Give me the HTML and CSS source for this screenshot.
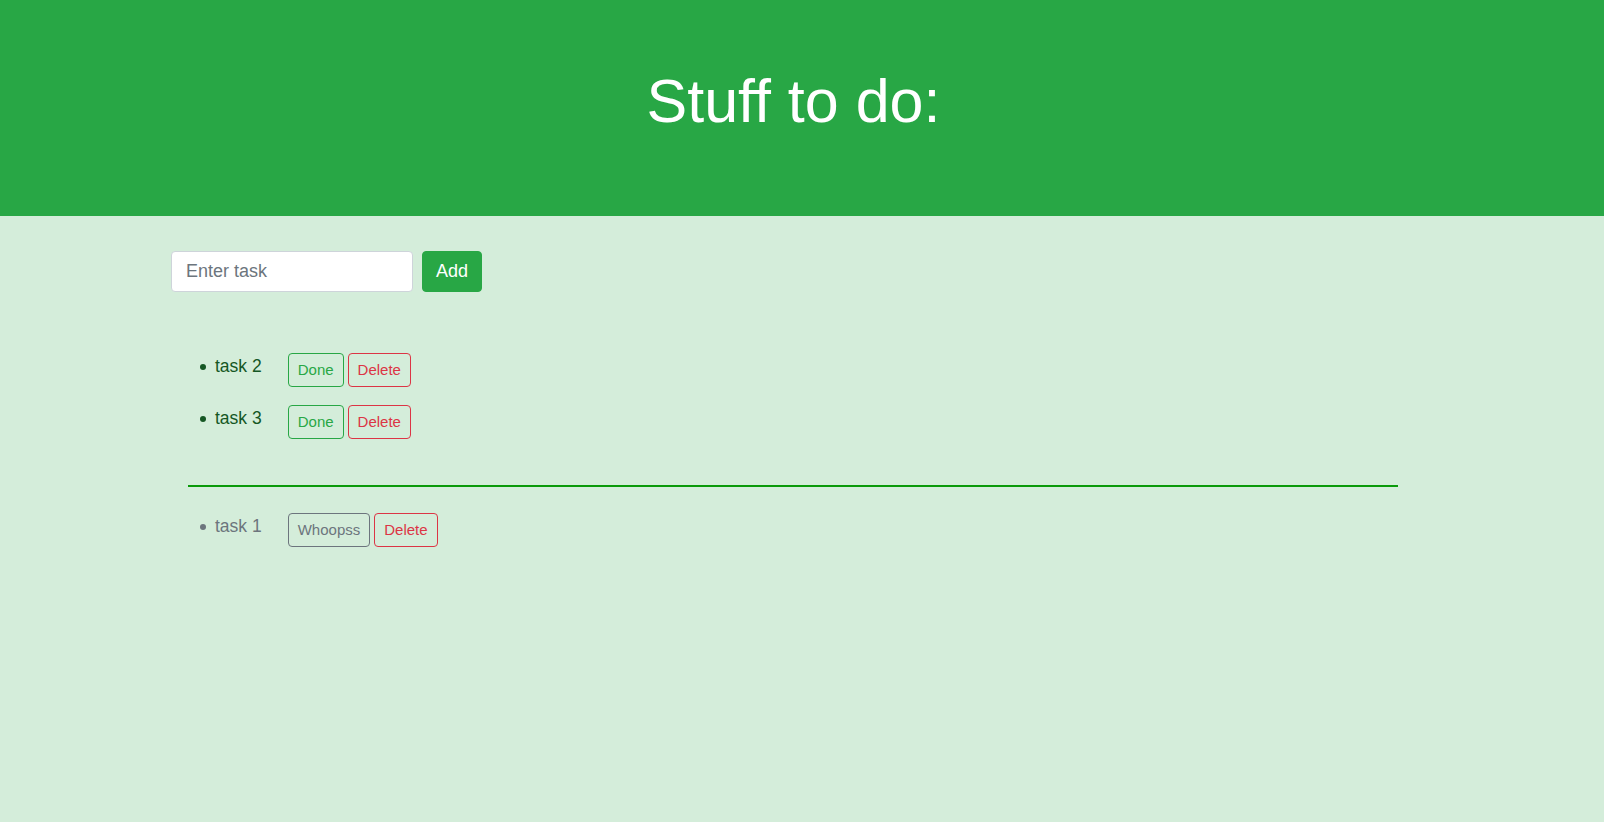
FILE: index.html
```html
<!DOCTYPE html>
<html lang="en">
<head>
<meta charset="utf-8">
<title>Stuff to do</title>
<link rel="stylesheet" href="styles.css">
</head>
<body>
<header class="hero">
  <h1 class="hero-title">Stuff to do:</h1>
</header>
<main class="content">
  <form class="add-form">
    <input class="task-input" type="text" placeholder="Enter task">
    <button class="btn btn-add" type="button">Add</button>
  </form>
  <ul class="task-list">
    <li class="task">
      <span class="task-name">task 2</span>
      <div class="task-actions">
        <button class="btn btn-sm btn-outline-success" type="button">Done</button>
        <button class="btn btn-sm btn-outline-danger" type="button">Delete</button>
      </div>
    </li>
    <li class="task">
      <span class="task-name">task 3</span>
      <div class="task-actions">
        <button class="btn btn-sm btn-outline-success" type="button">Done</button>
        <button class="btn btn-sm btn-outline-danger" type="button">Delete</button>
      </div>
    </li>
  </ul>
  <hr class="divider">
  <ul class="task-list done-list">
    <li class="task task-done">
      <span class="task-name">task 1</span>
      <div class="task-actions">
        <button class="btn btn-sm btn-outline-secondary" type="button">Whoopss</button>
        <button class="btn btn-sm btn-outline-danger" type="button">Delete</button>
      </div>
    </li>
  </ul>
</main>
</body>
</html>
```

FILE: styles.css
```css
* { box-sizing: border-box; }

html, body {
  margin: 0;
  padding: 0;
}

body {
  font-family: "Liberation Sans", Arial, sans-serif;
  background: #d4edda;
  color: #155724;
  min-height: 822px;
}

.hero {
  background: #28a745;
  height: 216px;
  padding: 65px 17px 0 0;
}

.hero-title {
  margin: 0;
  text-align: center;
  color: #ffffff;
  font-size: 61px;
  line-height: 72px;
  font-weight: 300;
}

.content {
  padding: 35px 189px 0 171px;
}

.add-form {
  display: flex;
  gap: 9px;
  margin: 0;
}

.task-input {
  width: 242px;
  height: 41px;
  border: 1px solid #ced4da;
  border-radius: 4px;
  background: #fff;
  padding: 0 14px;
  font-family: inherit;
  font-size: 18px;
  color: #495057;
  outline: none;
}

.task-input::placeholder {
  color: #6c757d;
}

.btn {
  font-family: inherit;
  cursor: pointer;
  background: transparent;
  border: 1px solid transparent;
  border-radius: 4px;
}

.btn-add {
  width: 60px;
  height: 41px;
  background: #28a745;
  border-color: #28a745;
  color: #fff;
  font-size: 18px;
  padding: 0;
}

.task-list {
  list-style: none;
  margin: 0;
  padding: 0 0 0 29px;
}

.task-list:first-of-type {
  margin-top: 61px;
}

.task {
  display: flex;
  align-items: flex-start;
  height: 34px;
  margin-bottom: 18px;
  font-size: 17.5px;
  line-height: 27px;
}

.task:last-child {
  margin-bottom: 0;
}

.task::before {
  content: "";
  width: 6px;
  height: 6px;
  border-radius: 50%;
  background: currentColor;
  margin-top: 11px;
  margin-right: 9px;
  flex: none;
}

.task-name {
  margin-right: 26px;
}

.task-actions {
  display: flex;
  gap: 4px;
}

.btn-sm {
  height: 34px;
  font-size: 15px;
  line-height: 24px;
  padding: 4px 9px;
}

.btn-outline-success {
  color: #28a745;
  border-color: #28a745;
}

.btn-outline-danger {
  color: #dc3545;
  border-color: #dc3545;
}

.btn-outline-secondary {
  color: #6c757d;
  border-color: #6c757d;
}

.task-done {
  color: #6c757d;
}

.divider {
  border: 0;
  border-top: 2px solid #0a9a0a;
  margin: 46px 17px 26px 17px;
  height: 0;
}
```
